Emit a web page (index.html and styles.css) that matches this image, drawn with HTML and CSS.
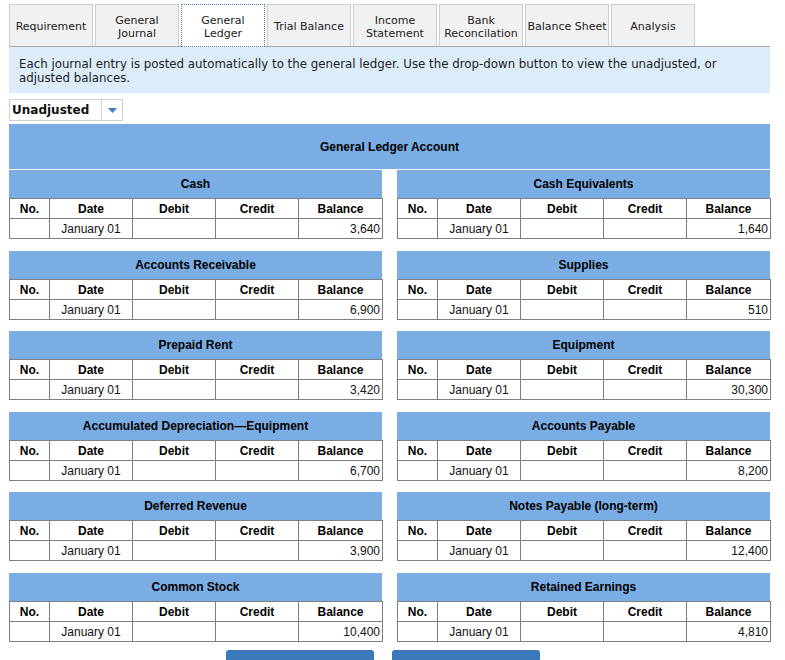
FILE: index.html
```html
<!DOCTYPE html>
<html lang="en">
<head>
<meta charset="utf-8">
<title>General Ledger</title>
<link rel="stylesheet" href="styles.css">
</head>
<body>
<div class="page">
  <div class="tabs">
    <div class="tab">Requirement</div>
    <div class="tab">General<br>Journal</div>
    <div class="tab active">General<br>Ledger</div>
    <div class="tab">Trial Balance</div>
    <div class="tab">Income<br>Statement</div>
    <div class="tab">Bank<br>Reconcilation</div>
    <div class="tab">Balance Sheet</div>
    <div class="tab">Analysis</div>
  </div>
  <div class="info">Each journal entry is posted automatically to the general ledger. Use the drop-down button to view the unadjusted, or adjusted balances.</div>
  <div class="select">
    <span class="select-label">Unadjusted</span>
    <span class="select-btn"><svg width="9" height="5" viewBox="0 0 9 5"><path d="M0 0H9L4.5 5Z" fill="#3f7bc0"/></svg></span>
  </div>

  <div class="gl">
    <div class="gl-title">General Ledger Account</div>
    <div class="accounts">

      <div class="account">
        <div class="acc-title">Cash</div>
        <table class="ledger">
          <colgroup><col class="c-no"><col class="c-mid"><col class="c-mid"><col class="c-mid"><col class="c-bal"></colgroup>
          <tr><th>No.</th><th>Date</th><th>Debit</th><th>Credit</th><th>Balance</th></tr>
          <tr><td></td><td class="date">January 01</td><td></td><td></td><td class="num">3,640</td></tr>
        </table>
      </div>

      <div class="account">
        <div class="acc-title">Cash Equivalents</div>
        <table class="ledger">
          <colgroup><col class="c-no"><col class="c-mid"><col class="c-mid"><col class="c-mid"><col class="c-bal"></colgroup>
          <tr><th>No.</th><th>Date</th><th>Debit</th><th>Credit</th><th>Balance</th></tr>
          <tr><td></td><td class="date">January 01</td><td></td><td></td><td class="num">1,640</td></tr>
        </table>
      </div>

      <div class="account">
        <div class="acc-title">Accounts Receivable</div>
        <table class="ledger">
          <colgroup><col class="c-no"><col class="c-mid"><col class="c-mid"><col class="c-mid"><col class="c-bal"></colgroup>
          <tr><th>No.</th><th>Date</th><th>Debit</th><th>Credit</th><th>Balance</th></tr>
          <tr><td></td><td class="date">January 01</td><td></td><td></td><td class="num">6,900</td></tr>
        </table>
      </div>

      <div class="account">
        <div class="acc-title">Supplies</div>
        <table class="ledger">
          <colgroup><col class="c-no"><col class="c-mid"><col class="c-mid"><col class="c-mid"><col class="c-bal"></colgroup>
          <tr><th>No.</th><th>Date</th><th>Debit</th><th>Credit</th><th>Balance</th></tr>
          <tr><td></td><td class="date">January 01</td><td></td><td></td><td class="num">510</td></tr>
        </table>
      </div>

      <div class="account">
        <div class="acc-title">Prepaid Rent</div>
        <table class="ledger">
          <colgroup><col class="c-no"><col class="c-mid"><col class="c-mid"><col class="c-mid"><col class="c-bal"></colgroup>
          <tr><th>No.</th><th>Date</th><th>Debit</th><th>Credit</th><th>Balance</th></tr>
          <tr><td></td><td class="date">January 01</td><td></td><td></td><td class="num">3,420</td></tr>
        </table>
      </div>

      <div class="account">
        <div class="acc-title">Equipment</div>
        <table class="ledger">
          <colgroup><col class="c-no"><col class="c-mid"><col class="c-mid"><col class="c-mid"><col class="c-bal"></colgroup>
          <tr><th>No.</th><th>Date</th><th>Debit</th><th>Credit</th><th>Balance</th></tr>
          <tr><td></td><td class="date">January 01</td><td></td><td></td><td class="num">30,300</td></tr>
        </table>
      </div>

      <div class="account">
        <div class="acc-title">Accumulated Depreciation—Equipment</div>
        <table class="ledger">
          <colgroup><col class="c-no"><col class="c-mid"><col class="c-mid"><col class="c-mid"><col class="c-bal"></colgroup>
          <tr><th>No.</th><th>Date</th><th>Debit</th><th>Credit</th><th>Balance</th></tr>
          <tr><td></td><td class="date">January 01</td><td></td><td></td><td class="num">6,700</td></tr>
        </table>
      </div>

      <div class="account">
        <div class="acc-title">Accounts Payable</div>
        <table class="ledger">
          <colgroup><col class="c-no"><col class="c-mid"><col class="c-mid"><col class="c-mid"><col class="c-bal"></colgroup>
          <tr><th>No.</th><th>Date</th><th>Debit</th><th>Credit</th><th>Balance</th></tr>
          <tr><td></td><td class="date">January 01</td><td></td><td></td><td class="num">8,200</td></tr>
        </table>
      </div>

      <div class="account">
        <div class="acc-title">Deferred Revenue</div>
        <table class="ledger">
          <colgroup><col class="c-no"><col class="c-mid"><col class="c-mid"><col class="c-mid"><col class="c-bal"></colgroup>
          <tr><th>No.</th><th>Date</th><th>Debit</th><th>Credit</th><th>Balance</th></tr>
          <tr><td></td><td class="date">January 01</td><td></td><td></td><td class="num">3,900</td></tr>
        </table>
      </div>

      <div class="account">
        <div class="acc-title">Notes Payable (long-term)</div>
        <table class="ledger">
          <colgroup><col class="c-no"><col class="c-mid"><col class="c-mid"><col class="c-mid"><col class="c-bal"></colgroup>
          <tr><th>No.</th><th>Date</th><th>Debit</th><th>Credit</th><th>Balance</th></tr>
          <tr><td></td><td class="date">January 01</td><td></td><td></td><td class="num">12,400</td></tr>
        </table>
      </div>

      <div class="account">
        <div class="acc-title">Common Stock</div>
        <table class="ledger">
          <colgroup><col class="c-no"><col class="c-mid"><col class="c-mid"><col class="c-mid"><col class="c-bal"></colgroup>
          <tr><th>No.</th><th>Date</th><th>Debit</th><th>Credit</th><th>Balance</th></tr>
          <tr><td></td><td class="date">January 01</td><td></td><td></td><td class="num">10,400</td></tr>
        </table>
      </div>

      <div class="account">
        <div class="acc-title">Retained Earnings</div>
        <table class="ledger">
          <colgroup><col class="c-no"><col class="c-mid"><col class="c-mid"><col class="c-mid"><col class="c-bal"></colgroup>
          <tr><th>No.</th><th>Date</th><th>Debit</th><th>Credit</th><th>Balance</th></tr>
          <tr><td></td><td class="date">January 01</td><td></td><td></td><td class="num">4,810</td></tr>
        </table>
      </div>

    </div>
  </div>

  <div class="nav">
    <button class="nav-btn">&lt; General Journal</button>
    <button class="nav-btn">Trial Balance &gt;</button>
  </div>
</div>
</body>
</html>
```

FILE: styles.css
```css
html, body {
  margin: 0;
  padding: 0;
  background: #fff;
}

.page {
  width: 761px;
  margin-left: 9px;
  font-family: "DejaVu Sans", Verdana, sans-serif;
  color: #222;
}

/* Tabs */
.tabs {
  display: flex;
  gap: 2px;
  margin-top: 4px;
  border-bottom: 1px solid #a9a9a9;
  height: 42px;
}

.tab {
  box-sizing: border-box;
  width: 84px;
  height: 42px;
  padding-top: 2px;
  border: 1px solid #cccccc;
  border-bottom: none;
  background: #f1f1f1;
  display: flex;
  align-items: center;
  justify-content: center;
  text-align: center;
  font-size: 11px;
  line-height: 13px;
  color: #222;
}

.tab.active {
  background: #fff;
  height: 43px;
  border: 1px dotted #4a72a8;
}

/* Info box */
.info {
  background: #dcecf9;
  padding: 10px 10px 8px;
  font-size: 11.8px;
  line-height: 14px;
  color: #222;
}

/* Dropdown */
.select {
  margin-top: 6px;
  display: flex;
  width: 114px;
  height: 22px;
  box-sizing: border-box;
  border: 1px solid #d0d0d0;
  background: #fff;
}

.select-label {
  flex: 1;
  font-weight: bold;
  font-size: 12px;
  line-height: 21px;
  padding-left: 2px;
  color: #111;
  border-right: 1px solid #d8d8d8;
}

.select-btn {
  width: 20px;
  display: flex;
  align-items: center;
  justify-content: center;
}

/* General ledger */
.gl {
  margin-top: 3px;
  font-family: "Liberation Sans", Arial, sans-serif;
  font-size: 12px;
  color: #000;
}

.gl-title {
  height: 43px;
  padding-top: 2px;
  line-height: 43px;
  background: #7aade3;
  text-align: center;
  font-weight: bold;
  border-bottom: 1px solid #fff;
}

.accounts {
  display: grid;
  grid-template-columns: 373px 373px;
  column-gap: 15px;
  row-gap: 11.5px;
}

.acc-title {
  height: 28px;
  line-height: 28px;
  background: #7aade3;
  text-align: center;
  font-weight: bold;
}

.ledger {
  width: 373px;
  table-layout: fixed;
  border-collapse: collapse;
  background: #fff;
}

.c-no { width: 40px; }
.c-mid { width: 83px; }
.c-bal { width: 84px; }

.ledger th,
.ledger td {
  border: 1px solid #7f7f7f;
  height: 17px;
  padding: 2px 0 0;
  line-height: 17px;
  font-size: 12px;
  text-align: center;
  white-space: nowrap;
}

.ledger th {
  font-weight: bold;
  color: #000;
}

.ledger td {
  color: #111;
}

.ledger td.num {
  text-align: right;
  padding-right: 2px;
}

/* Navigation */
.nav {
  display: flex;
  justify-content: center;
  gap: 18px;
  padding-right: 14px;
  margin-top: 8.5px;
}

.nav-btn {
  width: 148px;
  height: 30px;
  border: none;
  border-radius: 3px;
  background: #3b78b9;
  color: #fff;
  font-family: "Liberation Sans", Arial, sans-serif;
  font-weight: bold;
  font-size: 12px;
}
```
